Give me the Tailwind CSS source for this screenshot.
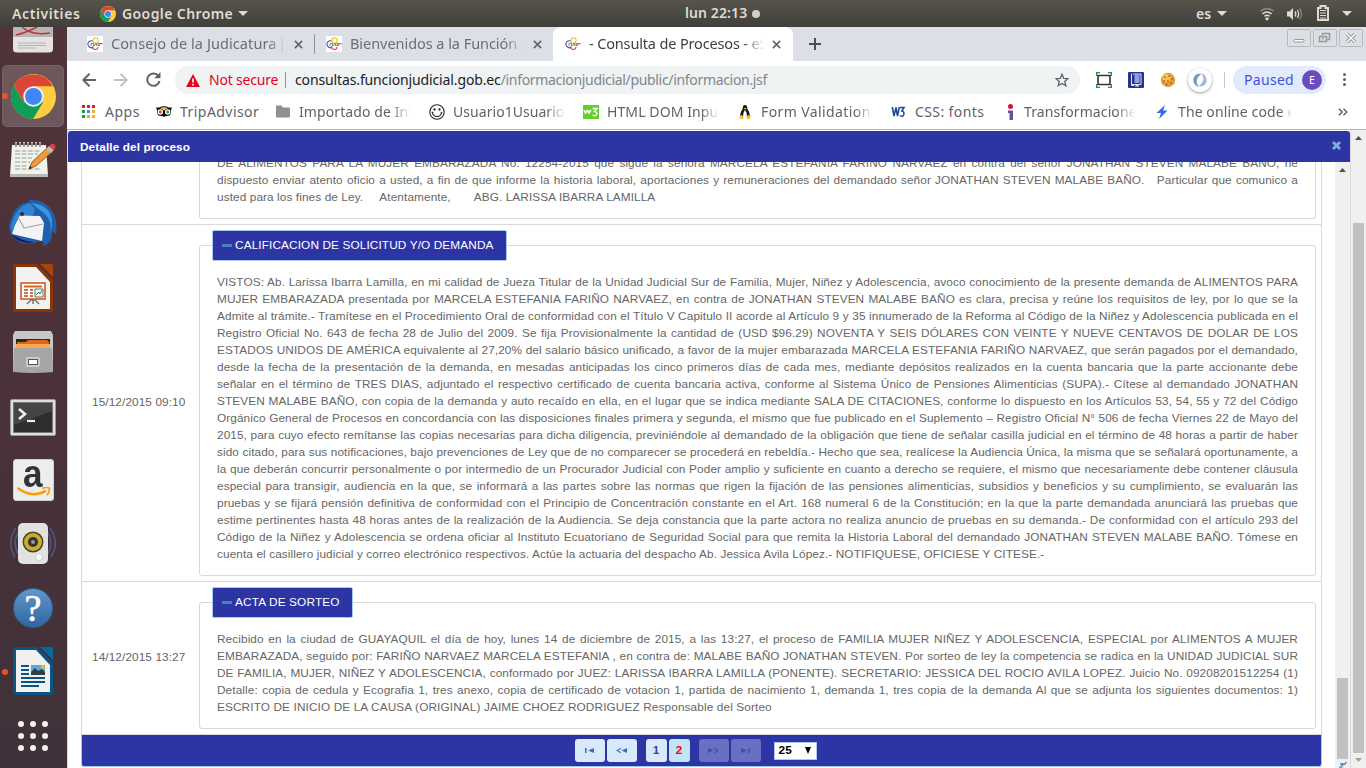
<!DOCTYPE html>
<html lang="es">
<head>
<meta charset="utf-8">
<title>Consulta de Procesos</title>
<script src="https://cdn.jsdelivr.net/npm/@tailwindcss/browser@4"></script>
</head>
<body class="w-[1366px] h-[768px] overflow-hidden bg-white font-['Noto_Sans','Open_Sans',sans-serif]">
<svg class="hidden">
  <defs>
    <symbol id="chrome" viewBox="0 0 44 44">
      <circle cx="22" cy="22" r="22" fill="#ffcd40"/>
      <path d="M2.900 11A22 22 0 0 0 21.500 44L31.500 27.500L12.500 27.500Z" fill="#0f9d58"/>
      <path d="M2.900 11A22 22 0 0 1 41.100 12L22 12L12.500 27.500Z" fill="#db4437"/>
      <circle cx="22" cy="22" r="10" fill="#f1f1f1"/><circle cx="22" cy="22" r="8.300" fill="#4285f4"/>
    </symbol>
    <symbol id="fav" viewBox="0 0 16 16">
      <g fill="none" stroke-width="1.100">
        <ellipse cx="8.500" cy="4.500" rx="2.600" ry="2.800" stroke="#e8c61c"/>
        <path d="M5.500 4.800C2 4.500 .7 6.500 .9 8.500C1.200 11 4 12.500 6 11.500" stroke="#3d4fa0"/>
        <path d="M5.500 10.500C6 14.500 11 14.500 11 11" stroke="#d03a3a"/>
        <path d="M10.500 7.800H15.500M10.500 9.200H13" stroke="#a83a20"/>
        <path d="M4 10V7.500H6.500V10.500M7.500 10L9 7L10 10" stroke="#777" stroke-width=".9"/>
      </g>
    </symbol>
    <symbol id="close" viewBox="0 0 10 10"><path d="M1 1L9 9M9 1L1 9" stroke="#5f6368" stroke-width="1.700" fill="none"/></symbol>
    <symbol id="down" viewBox="0 0 10 5"><path d="M0 0H10L5 5Z" fill="currentColor"/></symbol>
  </defs>
</svg>

<header class="h-[27px] flex items-center bg-linear-to-b from-[#57544c] to-[#403f3a] text-[#dfdbd2] text-[14px] font-semibold">
  <span class="ml-3 w-[88px] tracking-[0.600px]">Activities</span>
  <svg class="size-4"><use href="#chrome"/></svg>
  <span class="ml-[6px] w-[116px] whitespace-nowrap tracking-[0.400px]">Google Chrome</span>
  <svg class="w-[10px] h-[5px]"><use href="#down"/></svg>
  <span class="ml-[437px] w-[67px] -mt-[2px] whitespace-nowrap tracking-[0.100px]">lun 22:13</span>
  <span class="size-2 rounded-full bg-[#d2cfc7]"></span>
  <span class="ml-[436px] w-[21px]">es</span>
  <svg class="w-[10px] h-[5px]"><use href="#down"/></svg>
  <svg class="ml-[32px] w-4 h-[14px]" viewBox="0 0 16 14" fill="none" stroke="#dfdbd2" stroke-width="1.600"><path d="M1.500 4.200Q8 -1 14.500 4.200" opacity=".4"/><path d="M3.500 6.800Q8 3.200 12.500 6.800M5.500 9.300Q8 7.300 10.500 9.300"/><circle cx="8" cy="11.800" r="1.600" fill="#dfdbd2" stroke="none"/></svg>
  <svg class="ml-[12px] w-4 h-[14px]" viewBox="0 0 16 14" fill="none" stroke="#dfdbd2" stroke-width="1.300"><path d="M0 4.500H2.500L6 1V13L2.500 9.500H0Z" fill="#dfdbd2" stroke="none"/><path d="M8 4.500Q9.800 7 8 9.500M10.300 3Q13 7 10.300 11"/><path d="M12.500 1.300Q16.500 7 12.500 12.700" opacity=".4"/></svg>
  <svg class="ml-[14px] -mt-[2px] w-[12px] h-4" viewBox="0 0 12 16" fill="none" stroke="#dfdbd2" stroke-width="2"><path d="M1 3H3.500V1H8.500V3H11V15H1Z"/><path d="M3 5.500H9M3 8H9M3 10.500H9M3 13H9" stroke-width="1.200"/></svg>
  <svg class="ml-[13px] w-[10px] h-[5px]"><use href="#down"/></svg>
</header>

<div class="flex h-[741px]">
  <nav class="w-[67px] pr-px shrink-0 bg-linear-to-b from-[#503439] via-[#4a3238] to-[#40313a] flex flex-col overflow-hidden">
    <div class="h-[37px] flex justify-center shrink-0"><svg class="w-[42px] h-[27px]" viewBox="0 0 42 27"><path d="M1 0H41V22Q41 25.500 37 25.500H5Q1 25.500 1 22Z" fill="#e4e2e2"/><path d="M1 0H41V10H1Z" fill="#b9b4b5"/><path d="M4 8Q16 5 25 0M10 0Q20 9 38 6" stroke="#b9383e" stroke-width="1.500" fill="none"/><path d="M6 16H34M6 18.500H34M6 21H24" stroke="#aaa" stroke-width=".8"/></svg></div>
    <div class="h-16 shrink-0 flex items-center"><div class="ml-[2px] w-[62px] h-[62px] rounded-[5px] bg-[#6d575b] border border-[#76636a] flex items-center"><span class="-ml-[1px] size-[6px] rounded-full bg-[#e95420]"></span><svg class="ml-[3px] size-[45px]"><use href="#chrome"/></svg></div></div>
    <div class="h-16 shrink-0 grid place-items-center"><svg class="w-[46px] h-[38px]" viewBox="0 0 46 38"><path d="M2 4H36L38 35H0Z" fill="#f3f3ee"/><path d="M0 33H38V36H0Z" fill="#bbb9b3"/><path d="M6 1V5M10 1V5M14 1V5M18 1V5M22 1V5M26 1V5M30 1V5" stroke="#ccc" stroke-width="2"/><path d="M6 2V6M10 2V6M14 2V6M18 2V6M22 2V6M26 2V6M30 2V6" stroke="#555" stroke-width="1"/><path d="M5 10H30M5 13H28M5 17H22M5 21H20M5 25H18M5 28H30" stroke="#999" stroke-dasharray="5 1.500" stroke-width="1"/><path d="M19 28L22 21L37 7L42 11L26 25Z" fill="#f09a3c" stroke="#7b4b1b" stroke-width=".8"/><path d="M36 8L39 5L44 9L41 12Z" fill="#bbb"/><path d="M39 5L42 2.500Q46 3 45.500 7L43.500 9Z" fill="#e33d44"/><path d="M19 28L20 25L22 27Z" fill="#222"/></svg></div>
    <div class="h-16 shrink-0 grid place-items-center"><svg class="size-[48px]" viewBox="0 0 48 48"><path d="M3 16Q8 3 21 2L19 0Q36 -1 43 11Q49 19 47 34L43 31Q44 42 35 46L33 40Q20 46 10 42Q0 36 0 26Z" fill="#1f5fae"/><path d="M22 3Q38 4 42 16Q45 24 40 38Q46 20 32 11Z" fill="#3a94de"/><path d="M3 22Q8 7 20 3Q30 10 22 16Q12 16 7 22L3 32Q1 27 3 22Z" fill="#2f83cf"/><path d="M6 25L11 15.500L31 16L35 23L33 41L3 34Z" fill="#f3f3f3"/><path d="M9 17L15 28L34 24" fill="none" stroke="#a9a9b4" stroke-width="1.200"/><path d="M2 34Q12 41 25 42Q10 45 2 34Z" fill="#22104f"/><circle cx="13" cy="14" r="2" fill="#2a2940"/></svg></div>
    <div class="h-16 shrink-0 grid place-items-center"><svg class="w-10 h-[48px]" viewBox="0 0 40 48"><path d="M2 0H24L40 16V46Q40 48 38 48H2Q0 48 0 46V2Q0 0 2 0Z" fill="#8a3506"/><path d="M27 0H38Q40 0 40 2V13Z" fill="#b04206"/><path d="M3 3H23L37 18V45H3Z" fill="#f2f2f0"/><path d="M8 19H32V35H8Z" fill="#fff" stroke="#c9561c" stroke-width="1.500"/><path d="M11 22.500H29" stroke="#d8621e" stroke-width="2"/><path d="M11 26H15M11 29H15M11 32H15M17 26H20M17 29H20M17 32H20" stroke="#b3481a" stroke-width="1.500"/><path d="M22 25H30V33H22Z" fill="#fff" stroke="#666"/><path d="M23 31L26 28L27 30L29 26" fill="none" stroke="#1c9c3c"/><path d="M14 40L18 36H22L26 40M20 35V40" stroke="#777" fill="none" stroke-width="1.500"/></svg></div>
    <div class="h-16 shrink-0 grid place-items-center"><svg class="w-[42px] h-[44px]" viewBox="0 0 42 44"><path d="M3 1H39L41 5V41H1V5Z" fill="#c7c7c7"/><path d="M4 9H38V18H4Z" fill="#2c2522"/><path d="M5 12H14L16 10H35L37 12V18H5Z" fill="#e0641f"/><path d="M4 14H38V18H4Z" fill="#f7a94e"/><path d="M2 18H40L41 42Q21 44 1 42Z" fill="#a6a6a6"/><rect x="14" y="27" width="14" height="10" rx="2" fill="#ccc"/><rect x="16.500" y="29.500" width="9" height="5" fill="#fff" stroke="#555"/></svg></div>
    <div class="h-16 shrink-0 grid place-items-center"><svg class="w-[46px] h-[38px] mt-[3px]" viewBox="0 0 46 38"><rect x=".5" y=".5" width="45" height="36" rx="1.500" fill="#dedede" stroke="#999"/><rect x="3.500" y="3.500" width="39" height="30" fill="#2e2e2e" stroke="#777"/><path d="M4 4H42L42 12L4 26Z" fill="#454545"/><path d="M9 10L15 15L9 20" stroke="#eee" stroke-width="2.600" fill="none"/><path d="M17 22H25" stroke="#eee" stroke-width="2.200"/></svg></div>
    <div class="h-16 shrink-0 grid place-items-center"><div class="w-[41px] h-[42px] rounded-[3px] bg-[#ededed] border border-[#cfcfcf] flex flex-col items-center"><span class="text-[39px] leading-[46px] h-[46px] font-bold text-[#333] -mt-[9px] scale-x-90 font-['Liberation_Sans']">a</span><svg class="-mt-[10px] w-[37px] h-[11px] shrink-0" viewBox="0 0 37 12"><path d="M1 1Q17 13 32 4" fill="none" stroke="#f90" stroke-width="2.600"/><path d="M28 1.500Q34 -.5 36 1.500Q36 6 33 9" fill="none" stroke="#f90" stroke-width="1.800"/></svg></div></div>
    <div class="h-16 shrink-0 grid place-items-center"><svg class="w-[48px] h-[44px]" viewBox="0 0 48 44"><path d="M7 6Q-3 20 6 35M10 9Q3 20 9 32M41 6Q51 20 42 35M38 9Q45 20 39 32" stroke="#4f5a84" stroke-width="1.500" fill="none"/><rect x="9" y="1" width="30" height="41" rx="5" fill="#e2e2df"/><circle cx="24" cy="20" r="10.500" fill="#444"/><circle cx="24" cy="20" r="9" fill="#ccab25"/><circle cx="24" cy="20" r="5" fill="#333"/><circle cx="24" cy="20" r="2" fill="#999"/><circle cx="30" cy="35" r="3.500" fill="#fafafa" stroke="#bbb" stroke-width=".6"/></svg></div>
    <div class="h-16 shrink-0 grid place-items-center"><div class="size-10 rounded-full bg-linear-to-b from-[#6297cc] to-[#2f669f] border border-[#2d5e93] grid place-items-center"><span class="font-['Liberation_Serif'] text-white text-[38px] leading-[38px] [-webkit-text-stroke:0.600px_white]">?</span></div></div>
    <div class="h-16 shrink-0 flex items-center"><span class="ml-[2px] size-[6px] rounded-full bg-[#e95420]"></span><svg class="ml-[5px] w-10 h-[48px] -mt-[2px]" viewBox="0 0 40 48"><path d="M2 0H24L40 16V46Q40 48 38 48H2Q0 48 0 46V2Q0 0 2 0Z" fill="#075485"/><path d="M27 0H38Q40 0 40 2V13Z" fill="#0667a2"/><path d="M3 3H23L37 18V45H3Z" fill="#f0f0ee"/><path d="M8 19H16M8 23H16M8 27H16M8 31H32M8 35H32M8 39H26" stroke="#075485" stroke-width="2"/><rect x="18" y="18" width="14" height="10" fill="#5fa8d8"/><path d="M18 28V25L22 21L25 24L29 22L32 25V28Z" fill="#333d3d"/><circle cx="30" cy="20" r="2" fill="#e8b840"/></svg></div>
    <div class="h-16 shrink-0 grid place-items-center"><div class="grid grid-cols-3 gap-[6px]"><i class="size-[6px] rounded-full bg-[#f2f1ef]"></i><i class="size-[6px] rounded-full bg-[#f2f1ef]"></i><i class="size-[6px] rounded-full bg-[#f2f1ef]"></i><i class="size-[6px] rounded-full bg-[#f2f1ef]"></i><i class="size-[6px] rounded-full bg-[#f2f1ef]"></i><i class="size-[6px] rounded-full bg-[#f2f1ef]"></i><i class="size-[6px] rounded-full bg-[#f2f1ef]"></i><i class="size-[6px] rounded-full bg-[#f2f1ef]"></i><i class="size-[6px] rounded-full bg-[#f2f1ef]"></i></div></div>
  </nav>

  <main class="w-[1299px] flex flex-col">
    <div class="h-[34px] shrink-0 bg-[#dcdfe6] flex items-center text-[14.500px] text-[#6b6e73] whitespace-nowrap">
      <div class="ml-5 w-[227px] flex items-center"><svg class="size-4 bg-white mr-2"><use href="#fav"/></svg><span class="w-[175px] overflow-hidden mask-r-from-90% tracking-[0.080px]">Consejo de la Judicatura<span class="-ml-[2px]"> |</span></span><svg class="ml-[8px] size-[9px]"><use href="#close"/></svg></div>
      <span class="w-px h-5 bg-[#8e9196] mr-[11px]"></span>
      <div class="w-[227px] flex items-center"><svg class="size-4 bg-white mr-2"><use href="#fav"/></svg><span class="w-[175px] overflow-hidden mask-r-from-88% tracking-[-0.050px]">Bienvenidos a la Función .</span><svg class="ml-[8px] size-[9px]"><use href="#close"/></svg></div>
      <div class="w-[240px] h-[34px] pl-3 flex items-center bg-white rounded-t-[8px] text-[#3c4043]"><svg class="size-4 mr-2"><use href="#fav"/></svg><span class="w-[175px] overflow-hidden mask-r-from-88% tracking-[-0.150px]">- Consulta de Procesos - eS</span><svg class="ml-[8px] size-[9px]"><use href="#close"/></svg></div>
      <svg class="ml-4 size-3" viewBox="0 0 12 12"><path d="M6 0V12M0 6H12" stroke="#4b4e52" stroke-width="2"/></svg>
      <div class="ml-auto mr-[3px] mb-[14px] self-end flex gap-[2px]">
        <svg class="w-6 h-[18px]" viewBox="0 0 24 18" fill="none" stroke="#b9b9bc"><rect x=".5" y=".5" width="23" height="17" rx="1"/><rect x="7" y="10.500" width="10" height="2.500" rx="1" stroke="#999" fill="#fff"/></svg>
        <svg class="w-6 h-[18px]" viewBox="0 0 24 18" fill="none" stroke="#b9b9bc"><rect x=".5" y=".5" width="23" height="17" rx="1"/><path d="M9.500 6.500V4.500H16.500V10.500H14.500M6.500 7.500H13.500V12.500H6.500ZM9 9.500H11" stroke="#999" stroke-width="1.500"/></svg>
        <svg class="w-6 h-[18px]" viewBox="0 0 24 18" fill="none" stroke="#b9b9bc"><rect x=".5" y=".5" width="23" height="17" rx="1"/><path d="M8 5L16 13M16 5L8 13" stroke="#999" stroke-width="3.500"/><path d="M8 5L16 13M16 5L8 13" stroke="#fff" stroke-width="1.500"/></svg>
      </div>
    </div>

    <div class="h-[37px] shrink-0 flex items-center text-[14px]">
      <svg class="ml-[15px] size-[14px]" viewBox="0 0 14 14" fill="none" stroke="#5f6368" stroke-width="2"><path d="M14 7H1.500M7.500 .8L1.300 7L7.500 13.200"/></svg>
      <svg class="ml-[18px] size-[14px]" viewBox="0 0 14 14" fill="none" stroke="#bdc1c6" stroke-width="2"><path d="M0 7H12.500M6.500 .8L12.700 7L6.500 13.200"/></svg>
      <svg class="ml-[18px] size-[15px]" viewBox="0 0 15 15" fill="none" stroke="#5f6368" stroke-width="2"><path d="M12.500 4A6.200 6.200 0 1 0 13.500 9"/><path d="M14.500 0V6.300H8.200Z" fill="#5f6368" stroke="none"/></svg>
      <div class="ml-[14px] w-[905px] h-7 mt-[1px] rounded-full bg-[#eff3f4] flex items-center whitespace-nowrap">
        <svg class="ml-[11px] w-[14px] h-[13px]" viewBox="0 0 14 13"><path d="M7 0L14 13H0Z" fill="#e8001c"/><path d="M7 4.500V8.500M7 9.800V11.500" stroke="#fff" stroke-width="1.600"/></svg>
        <span class="ml-[9px] w-[76px] -mt-px text-[#e8001c] tracking-[-0.200px]">Not secure</span>
        <span class="w-px h-4 bg-[#8f9296]"></span>
        <span class="ml-[9px] -mt-px text-[#80868b] tracking-[-0.320px]"><span class="text-[#202124] tracking-[-0.130px]">consultas.funcionjudicial.gob.ec</span>/informacionjudicial/public/informacion.jsf</span>
        <svg class="ml-auto mr-[11px] size-[14px]" viewBox="0 0 14 14"><path d="M7 1.200L8.700 5.300L13 5.600L9.700 8.500L10.800 12.700L7 10.500L3.200 12.700L4.300 8.500L1 5.600L5.300 5.300Z" fill="none" stroke="#5f6368" stroke-width="1.300"/></svg>
      </div>
      <svg class="ml-4 size-4" viewBox="0 0 16 16" fill="none"><path d="M.5 4V.5H4M12 .5H15.500V4M15.500 12V15.500H12M4 15.500H.5V12" stroke="#129a3b" stroke-width="1.300"/><path d="M2 3.500H14V12.500H2Z" stroke="#333" stroke-width="1.600"/></svg>
      <svg class="ml-4 size-4" viewBox="0 0 16 16"><rect width="16" height="16" rx="1" fill="#25358d"/><path d="M3.500 1.500V13.500H6M5 2H13V12.500H4" fill="none" stroke="#dfe5ff"/><path d="M6.500 2.500H11.500V11H6.500Z" fill="#8fa0e0"/><path d="M8 13H10M7 14H11" stroke="#fff"/></svg>
      <svg class="ml-4 size-4" viewBox="0 0 16 16"><circle cx="8" cy="8" r="7.200" fill="#e79b32"/><circle cx="6.500" cy="6" r="4" fill="#f7c25a"/><g fill="#8c3c14"><circle cx="5" cy="5" r=".8"/><circle cx="9" cy="4" r=".8"/><circle cx="12" cy="7" r=".8"/><circle cx="4" cy="9" r=".8"/><circle cx="8" cy="9" r=".8"/><circle cx="11" cy="11" r=".8"/><circle cx="6.500" cy="12.500" r=".8"/></g></svg>
      <div class="ml-3 size-6 rounded-full bg-white shadow-[0_1px_3px_#999] grid place-items-center"><svg class="size-4" viewBox="0 0 16 16" fill="none"><path d="M9.500 2C1 -.5 -2.500 12 7 15C3 10 4.500 5 9.500 2Z" fill="#7896bd"/><path d="M6.500 14C15 16.500 18.500 4 9 1C13 6 11.500 11 6.500 14Z" fill="#a4b9d4"/></svg></div>
      <span class="ml-3 w-px h-4 bg-[#c9cbcf]"></span>
      <div class="ml-2 w-[93px] h-7 rounded-full bg-[#e2eafd] flex items-center"><span class="ml-[11px] w-[58px] text-[#3f50e0] tracking-[0.300px]">Paused</span><span class="size-5 rounded-full bg-[#694dbd] text-white text-[10.500px] leading-[20px] text-center">E</span></div>
      <svg class="ml-[17px] w-[3px] h-[13px]" viewBox="0 0 3 13" fill="#5f6368"><circle cx="1.500" cy="1.500" r="1.500"/><circle cx="1.500" cy="6.500" r="1.500"/><circle cx="1.500" cy="11.500" r="1.500"/></svg>
    </div>

    <div class="h-[32px] shrink-0 border-b border-[#b5b5b5] flex items-center pl-[13px] pb-[4px] text-[14px] tracking-[0.100px] text-[#5f6368] whitespace-nowrap">
      <div class="w-[76px] flex items-center gap-2"><svg class="w-4 h-[14px]" viewBox="-1 0 16 14"><g fill="#e0202c"><path d="M1 0h3v3H1zM6 0h3v3H6zM11 0h3v3h-3z"/></g><path d="M1 5h3v3H1zM1 10h3v3H1z" fill="#17a24c"/><path d="M6 5h3v3H6z" fill="#4285f4"/><path d="M6 10h3v3H6zM11 5h3v3h-3zM11 10h3v3h-3z" fill="#f9ab20"/></svg><span class="ml-px tracking-[0.500px]">Apps</span></div>
      <div class="w-[119px] flex items-center gap-2"><svg class="w-4 h-[11px]" viewBox="0 0 16 11"><path d="M0 1.500H3Q8 -1.200 13 1.500H16L15 4Q15.500 10 11 10Q9 10 8 11Q7 10 5 10Q.5 10 1 4Z" fill="#111"/><path d="M4 2Q8 .5 12 2L8 4.500Z" fill="#f4c84a"/><circle cx="4.300" cy="6" r="2.700" fill="#fff"/><circle cx="11.700" cy="6" r="2.700" fill="#fff"/><circle cx="4.300" cy="6" r="1.400" fill="#d33"/><circle cx="11.700" cy="6" r="1.400" fill="#2a9a4a"/></svg><span class="tracking-[0.450px]">TripAdvisor</span></div>
      <div class="w-[154px] flex items-center gap-2"><svg class="w-4 h-[13px]" viewBox="0 0 16 13"><path d="M2 .5H6.500L8 2.500H14Q15 2.500 15 3.500V11.500Q15 12.500 14 12.500H2Q1 12.500 1 11.500V1.500Q1 .5 2 .5Z" fill="#8e9095"/></svg><span class="w-[112px] overflow-hidden mask-r-from-82%">Importado de Int</span></div>
      <div class="w-[154px] flex items-center gap-2"><svg class="size-4" viewBox="0 0 16 16" fill="none" stroke="#222" stroke-width="1.100"><circle cx="8" cy="8" r="7.200"/><path d="M3.500 8.500Q4 12.500 8 12.500Q12 12.500 12.500 8.500M2.800 9L4.200 8M13.200 9L11.800 8"/><circle cx="5.500" cy="5.500" r=".6"/><circle cx="10.500" cy="5.500" r=".6"/></svg><span class="w-[112px] overflow-hidden mask-r-from-84% tracking-[0.050px]">Usuario1Usuario</span></div>
      <div class="w-[154px] flex items-center gap-2"><svg class="w-4 h-[14px]" viewBox="0 0 16 14"><rect width="16" height="14" fill="#62cf2a"/><path d="M1 5L2.500 8L4.500 5.500L6 8L8 5M9.500 3.500H14L11.500 6.500Q14.500 7 13.800 9.200Q12 12 9.500 10" fill="none" stroke="#fff" stroke-width="1.500"/></svg><span class="w-[112px] overflow-hidden mask-r-from-84%">HTML DOM Inpu</span></div>
      <div class="w-[153px] flex items-center gap-2"><svg class="size-[16px]" viewBox="0 0 16 16"><path d="M8 1Q10.500 1 10.300 5Q13.500 9 12.500 13H3.500Q2.500 9 5.700 5Q5.500 1 8 1Z" fill="#1a1a1a"/><path d="M8 6Q10.500 9 10 13H6Q5.500 9 8 6Z" fill="#fff"/><path d="M2 12L5 11L7 14L4 15.500ZM14 12L11 11L9 14L12 15.500ZM7 4H9.500L8 6Z" fill="#f3c21a"/></svg><span class="w-[112px] overflow-hidden mask-r-from-84% tracking-[0.400px]">Form Validation</span></div>
      <div class="w-[110px] flex items-center gap-2"><svg class="w-4 h-[12px]" viewBox="0 0 16 12" fill="none" stroke="#214b9b" stroke-width="1.600"><path d="M2.300 1L4 10L6 1.500L7.500 10L9.300 1M10 1.500H14L11.800 5Q14.500 5.500 13.800 8.500Q12.500 11.500 10 9.500"/></svg><span class="ml-px tracking-[0.400px]">CSS: fonts</span></div>
      <div class="w-[154px] flex items-center gap-2"><svg class="size-4" viewBox="0 0 16 16"><circle cx="10.500" cy="2.500" r="2.500" fill="#e0103a"/><path d="M8 6.500H13V16H9.500V9H8Z" fill="#6a4f9c"/></svg><span class="w-[112px] overflow-hidden mask-r-from-82%">Transformacione</span></div>
      <div class="w-[190px] flex items-center gap-2"><svg class="size-4" viewBox="0 0 16 16"><path d="M11 1L2.500 9H7L5 15L13.500 6.500H9Z" fill="#2e6fe0"/></svg><span class="w-[114px] overflow-hidden mask-r-from-90%">The online code e</span></div>
      <svg class="-ml-[6px] w-[10px] h-[8px]" viewBox="0 0 10 8" fill="none" stroke="#5f6368" stroke-width="1.500"><path d="M1 .8L4.200 4L1 7.200M5.500 .8L8.700 4L5.500 7.200"/></svg>
    </div>

    <div class="h-[638px] flex font-['Liberation_Sans',Arial,sans-serif] text-[11.800px] tracking-[0.098px] leading-[17px] text-[#666]">
      <section class="w-[1284px] border-x border-[#d9d9d9] pt-px flex flex-col">
        <div class="h-[31px] shrink-0 bg-[#2d35a5] rounded-t-[3px] flex items-center px-3 text-white font-bold"><span class="mt-[2px]">Detalle del proceso</span>
          <svg class="ml-auto -mr-[3px] mb-[2px] size-[9px]" viewBox="0 0 9 9"><path d="M1 1L8 8M8 1L1 8" stroke="#7db2d8" stroke-width="2.800"/></svg>
        </div>
        <div class="h-[606px] flex">
          <div class="ml-[13px] w-[1241px] overflow-hidden">
            <div class="border-x border-[#d9d9d9]">
              <div class="h-[63px] border-b border-[#d9d9d9] pl-[117px] pr-[5px]">
                <div class="h-[57px] border border-t-0 border-[#d9d9d9] rounded-b-[3px] px-[17px] overflow-hidden">
                  <div class="-mt-[7px]">
                    <p class="[text-align-last:justify] whitespace-nowrap">DE ALIMENTOS PARA LA MUJER EMBARAZADA No. 12254-2015 que sigue la señora MARCELA ESTEFANIA FARIÑO NARVAEZ en contra del señor JONATHAN STEVEN MALABE BAÑO, he</p>
                    <p class="[text-align-last:justify] whitespace-nowrap">dispuesto enviar atento oficio a usted, a fin de que informe la historia laboral, aportaciones y remuneraciones del demandado señor JONATHAN STEVEN MALABE BAÑO. &nbsp; Particular que comunico a</p>
                    <p class="whitespace-pre">usted para los fines de Ley.     Atentamente,       ABG. LARISSA IBARRA LAMILLA</p>
                  </div>
                </div>
              </div>
              <div class="h-[357px] border-b border-[#d9d9d9] flex items-center pr-[5px]">
                <span class="w-[117px] pl-[10px] -mt-px shrink-0">15/12/2015 09:10</span>
                <div class="mt-[15px] h-[331px] min-w-0 flex-1 border border-[#d9d9d9] rounded-[3px] px-[17px]">
                  <div class="-ml-[5px] -mt-[16px] w-[295px] h-[31px] border border-[#a6c9ee] bg-[#2d35a5] rounded-[2px] text-white flex items-center pl-[9px] whitespace-nowrap"><i class="w-[10px] h-[3px] mr-[3px] -mt-px bg-[#4a80bd]"></i><span class="tracking-[0.120px]">CALIFICACION DE SOLICITUD Y/O DEMANDA</span></div>
                  <div class="mt-[13px] [&>p]:whitespace-nowrap [&>p:not(:last-child)]:[text-align-last:justify]">
                    <p>VISTOS: Ab. Larissa Ibarra Lamilla, en mi calidad de Jueza Titular de la Unidad Judicial Sur de Familia, Mujer, Niñez y Adolescencia, avoco conocimiento de la presente demanda de ALIMENTOS PARA</p>
                    <p>MUJER EMBARAZADA presentada por MARCELA ESTEFANIA FARIÑO NARVAEZ, en contra de JONATHAN STEVEN MALABE BAÑO es clara, precisa y reúne los requisitos de ley, por lo que se la</p>
                    <p>Admite al trámite.- Tramítese en el Procedimiento Oral de conformidad con el Título V Capitulo II acorde al Artículo 9 y 35 innumerado de la Reforma al Código de la Niñez y Adolescencia publicada en el</p>
                    <p>Registro Oficial No. 643 de fecha 28 de Julio del 2009. Se fija Provisionalmente la cantidad de (USD $96.29) NOVENTA Y SEIS DÓLARES CON VEINTE Y NUEVE CENTAVOS DE DOLAR DE LOS</p>
                    <p>ESTADOS UNIDOS DE AMÉRICA equivalente al 27,20% del salario básico unificado, a favor de la mujer embarazada MARCELA ESTEFANIA FARIÑO NARVAEZ, que serán pagados por el demandado,</p>
                    <p>desde la fecha de la presentación de la demanda, en mesadas anticipadas los cinco primeros días de cada mes, mediante depósitos realizados en la cuenta bancaria que la parte accionante debe</p>
                    <p>señalar en el término de TRES DIAS, adjuntado el respectivo certificado de cuenta bancaria activa, conforme al Sistema Único de Pensiones Alimenticias (SUPA).- Cítese al demandado JONATHAN</p>
                    <p>STEVEN MALABE BAÑO, con copia de la demanda y auto recaído en ella, en el lugar que se indica mediante SALA DE CITACIONES, conforme lo dispuesto en los Artículos 53, 54, 55 y 72 del Código</p>
                    <p>Orgánico General de Procesos en concordancia con las disposiciones finales primera y segunda, el mismo que fue publicado en el Suplemento – Registro Oficial N° 506 de fecha Viernes 22 de Mayo del</p>
                    <p class="tracking-[0.085px]">2015, para cuyo efecto remítanse las copias necesarias para dicha diligencia, previniéndole al demandado de la obligación que tiene de señalar casilla judicial en el término de 48 horas a partir de haber</p>
                    <p>sido citado, para sus notificaciones, bajo prevenciones de Ley que de no comparecer se procederá en rebeldía.- Hecho que sea, realícese la Audiencia Única, la misma que se señalará oportunamente, a</p>
                    <p>la que deberán concurrir personalmente o por intermedio de un Procurador Judicial con Poder amplio y suficiente en cuanto a derecho se requiere, el mismo que necesariamente debe contener cláusula</p>
                    <p>especial para transigir, audiencia en la que, se informará a las partes sobre las normas que rigen la fijación de las pensiones alimenticias, subsidios y beneficios y su cumplimiento, se evaluarán las</p>
                    <p>pruebas y se fijará pensión definitiva de conformidad con el Principio de Concentración constante en el Art. 168 numeral 6 de la Constitución; en la que la parte demandada anunciará las pruebas que</p>
                    <p>estime pertinentes hasta 48 horas antes de la realización de la Audiencia. Se deja constancia que la parte actora no realiza anuncio de pruebas en su demanda.- De conformidad con el artículo 293 del</p>
                    <p>Código de la Niñez y Adolescencia se ordena oficiar al Instituto Ecuatoriano de Seguridad Social para que remita la Historia Laboral del demandado JONATHAN STEVEN MALABE BAÑO. Tómese en</p>
                    <p>cuenta el casillero judicial y correo electrónico respectivos. Actúe la actuaria del despacho Ab. Jessica Avila López.- NOTIFIQUESE, OFICIESE Y CITESE.-</p>
                  </div>
                </div>
              </div>
              <div class="h-[153px] border-b border-[#d9d9d9] flex items-center pr-[5px]">
                <span class="w-[117px] pl-[10px] -mt-px shrink-0">14/12/2015 13:27</span>
                <div class="mt-[15px] h-[127px] min-w-0 flex-1 border border-[#d9d9d9] rounded-[3px] px-[17px]">
                  <div class="-ml-[5px] -mt-[16px] w-[141px] h-[31px] border border-[#a6c9ee] bg-[#2d35a5] rounded-[2px] text-white flex items-center pl-[9px] whitespace-nowrap"><i class="w-[10px] h-[3px] mr-[3px] -mt-px bg-[#4a80bd]"></i><span class="tracking-[0.150px]">ACTA DE SORTEO</span></div>
                  <div class="mt-[13px] [&>p]:whitespace-nowrap [&>p:not(:last-child)]:[text-align-last:justify]">
                    <p>Recibido en la ciudad de GUAYAQUIL el día de hoy, lunes 14 de diciembre de 2015, a las 13:27, el proceso de FAMILIA MUJER NIÑEZ Y ADOLESCENCIA, ESPECIAL por ALIMENTOS A MUJER</p>
                    <p>EMBARAZADA, seguido por: FARIÑO NARVAEZ MARCELA ESTEFANIA , en contra de: MALABE BAÑO JONATHAN STEVEN. Por sorteo de ley la competencia se radica en la UNIDAD JUDICIAL SUR</p>
                    <p>DE FAMILIA, MUJER, NIÑEZ Y ADOLESCENCIA, conformado por JUEZ: LARISSA IBARRA LAMILLA (PONENTE). SECRETARIO: JESSICA DEL ROCIO AVILA LOPEZ. Juicio No. 09208201512254 (1)</p>
                    <p>Detalle: copia de cedula y Ecografia 1, tres anexo, copia de certificado de votacion 1, partida de nacimiento 1, demanda 1, tres copia de la demanda Al que se adjunta los siguientes documentos: 1)</p>
                    <p class="tracking-[0.120px]">ESCRITO DE INICIO DE LA CAUSA (ORIGINAL) JAIME CHOEZ RODRIGUEZ Responsable del Sorteo</p>
                  </div>
                </div>
              </div>
            </div>
            <div class="h-[32px] bg-[#2d35a5] border border-t-0 border-[#a6c9ee] rounded-b-[3px] flex items-center justify-center font-bold pr-[12px]">
              <span class="w-[30px] h-[23px] rounded-[3px] bg-[#d7e9fa] grid place-items-center mr-[2px]"><svg class="w-[9px] h-[5px]" viewBox="0 0 9 5" fill="#3a70b2"><path d="M0 0H1.500V5H0ZM9 0V5L3 2.500Z"/></svg></span>
              <span class="w-[30px] h-[23px] rounded-[3px] bg-[#d7e9fa] grid place-items-center mr-[9px]"><svg class="w-[11px] h-[5px]" viewBox="0 0 11 5" fill="#3a70b2"><path d="M5 .3L1 2.500L5 4.700" fill="none" stroke="#3a70b2" stroke-width="1.100"/><path d="M11 0V5L5.500 2.500Z"/></svg></span>
              <span class="w-[21px] h-[23px] rounded-[3px] bg-[#d7e9fa] text-[#4040a0] grid place-items-center mr-[2px]">1</span>
              <span class="w-[21px] h-[23px] rounded-[3px] bg-[#c3e3f7] text-[#f00] grid place-items-center mr-[9px]">2</span>
              <span class="w-[30px] h-[23px] rounded-[3px] bg-[#6a70c1] grid place-items-center mr-[2px]"><svg class="w-[11px] h-[5px]" viewBox="0 0 11 5" fill="#3a4fae"><path d="M6 .3L10 2.500L6 4.700" fill="none" stroke="#3a4fae" stroke-width="1.100"/><path d="M0 0V5L5.500 2.500Z"/></svg></span>
              <span class="w-[30px] h-[23px] rounded-[3px] bg-[#6a70c1] grid place-items-center mr-[13px]"><svg class="w-[9px] h-[5px]" viewBox="0 0 9 5" fill="#3a4fae"><path d="M7.500 0H9V5H7.500ZM0 0V5L6 2.500Z"/></svg></span>
              <span class="w-[43px] h-[18px] bg-white border border-[#a6c9ee] text-black flex items-center justify-between pl-1 pr-[5px]">25<svg class="w-[6px] h-[7px]" viewBox="0 0 6 7"><path d="M0 0H6L3 7Z"/></svg></span>
            </div>
          </div>
          <div class="ml-[13px] w-[15px] h-[606px] bg-[#f0f0f0] flex flex-col items-center">
            <svg class="mt-[6px] w-[7px] h-[4px]" viewBox="0 0 7 4"><path d="M0 4H7L3.500 0Z" fill="#505050"/></svg>
            <span class="mt-[506px] w-[11px] h-[81px] bg-[#c1c1c1]"></span>
            <svg class="mt-[3px] w-[8px] h-[6px]" viewBox="0 0 8 6"><path d="M0 6L8 0M1 2H7M3 6V1" stroke="#5b8cc0" stroke-width="1.300"/></svg>
          </div>
        </div>
      </section>
      <div class="w-[15px] bg-[#f0f0f0] flex flex-col items-center">
        <svg class="mt-[6px] w-[7px] h-[4px]" viewBox="0 0 7 4"><path d="M0 4H7L3.500 0Z" fill="#505050"/></svg>
        <span class="mt-[83px] w-[11px] h-[530px] bg-[#c1c1c1]"></span>
        <svg class="mt-[5px] w-[7px] h-[4px]" viewBox="0 0 7 4"><path d="M0 0H7L3.500 4Z" fill="#a3a3a3"/></svg>
      </div>
    </div>
  </main>
</div>
</body>
</html>
